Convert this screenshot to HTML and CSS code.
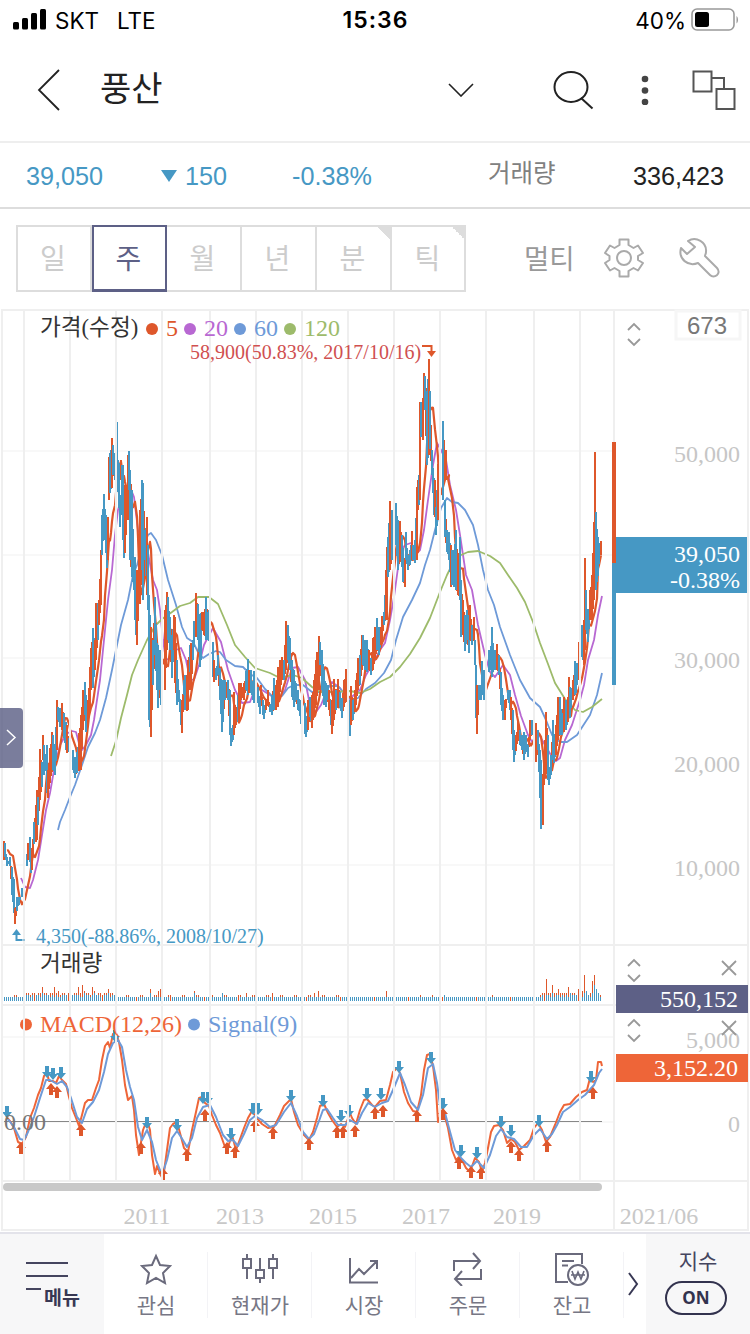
FILE: index.html
```html
<!DOCTYPE html>
<html lang="ko">
<head>
  <meta charset="UTF-8">
  <meta name="viewport" content="width=device-width, initial-scale=1">
  <title>풍산 차트</title>
  <link rel="stylesheet" href="styles.css">
</head>
<body>
  <div class="status-bar">
    <div class="carrier">
      <svg width="34" height="22" viewBox="0 0 34 22"><rect x="0" y="14" width="6" height="7.5" rx="1.5"/><rect x="9" y="10" width="6" height="11.5" rx="1.5"/><rect x="18" y="5" width="6" height="16.5" rx="1.5"/><rect x="27" y="1" width="6" height="20.500" rx="1.5"/></svg>
      <span class="operator">SKT</span><span>LTE</span>
    </div>
    <div class="clock">15:36</div>
    <div class="battery">
      <span>40%</span>
      <svg width="48" height="24" viewBox="0 0 48 24"><rect x="1" y="1" width="42" height="21" rx="5" fill="none" stroke="#999" stroke-width="1.600"/><rect x="4" y="4" width="14" height="15" rx="2.500"/><path d="M45.500 8c2 1.500 2 6 0 7.500z" fill="#999"/></svg>
    </div>
  </div>

  <header class="title-bar">
    <svg class="back" width="24" height="44" viewBox="0 0 24 44"><path d="M22 2L2 22l20 20"/></svg>
    <h1>풍산</h1>
    <svg class="drop" width="26" height="14" viewBox="0 0 26 14"><path d="M1 1l12 12L25 1"/></svg>
    <svg class="search" width="42" height="40" viewBox="0 0 42 40"><ellipse cx="18" cy="17" rx="16.500" ry="15"/><path d="M28 28l11.500 10.500"/></svg>
    <svg class="more" width="8" height="30" viewBox="0 0 8 30"><circle cx="4" cy="4" r="3.300"/><circle cx="4" cy="15.500" r="3.300"/><circle cx="4" cy="27" r="3.300"/></svg>
    <svg class="panes" width="44" height="40" viewBox="0 0 44 40"><path d="M1.500 1.500h18v20h-18zM24.500 19h18v20h-18zM20 8h12v11"/></svg>
  </header>

  <div class="quote">
    <span class="price">39,050</span>
    <span class="diff"><i class="down"></i>150</span>
    <span class="rate">-0.38%</span>
    <span class="vol-label">거래량</span>
    <span class="vol">336,423</span>
  </div>

  <div class="toolbar">
    <div class="tabs">
      <button class="tab">일</button>
      <button class="tab active">주</button>
      <button class="tab">월</button>
      <button class="tab">년</button>
      <button class="tab more-tab">분</button>
      <button class="tab more-tab">틱</button>
    </div>
    <span class="multi">멀티</span>
    <svg class="gear" width="40" height="40" viewBox="0 0 40 40"><path d="M15.500 1.500h9v5.500l5 3 4.500-2.500 5 7.500-5 3v4l5 3-5 7.500-4.500-2.500-5 3v5.500h-9V33l-5-3L6 32.500 1 25l4.500-3v-4L1 15l5-7.500 4.500 2.500 5-3z"/><circle cx="20" cy="20" r="7"/></svg>
    <svg class="wrench" width="42" height="42" viewBox="0 0 42 42"><path d="M10 4C18-1 29 5 28 15c0 2-1 3-1 4l12 12c5 6-3 11-7 7L20 26C10 30 0 22 3 11l6 6 8-7z"/></svg>
  </div>

  <svg class="chart" id="chart" width="750" height="924" viewBox="0 308 750 924">
    <g id="rows"></g>
    <g id="lines"></g>
    <g id="bars" shape-rendering="crispEdges"></g>
    <path class="zero" d="M4 1121.500H602"/>
    <g id="macd"></g>
    <circle cx="26" cy="1024.500" r="6" fill="#ee6538"/>
    <g id="columns" shape-rendering="crispEdges"></g>
    <rect x="3" y="1183" width="599" height="8" rx="4" fill="#c8c8c8"/>

    <g class="legend">
      <text x="40" y="335" class="name">가격(수정)</text>
      <circle cx="152" cy="329" r="6" fill="#de572b"/><text x="166" y="336" fill="#de572b">5</text>
      <circle cx="190" cy="329" r="6" fill="#b868d2"/><text x="204" y="336" fill="#b868d2">20</text>
      <circle cx="240" cy="329" r="6" fill="#6e9ad8"/><text x="254" y="336" fill="#6e9ad8">60</text>
      <circle cx="290" cy="329" r="6" fill="#9dbb6b"/><text x="304" y="336" fill="#9dbb6b">120</text>
      <text x="40" y="971" class="name">거래량</text>
      <text x="40" y="1032" fill="#ee6538">MACD(12,26)</text>
      <circle cx="194" cy="1024.500" r="6" fill="#6e9ad8"/><text x="208" y="1032" fill="#6e9ad8">Signal(9)</text>
      <text x="4" y="1130" class="zero-text">0.00</text>
    </g>
    <text x="190" y="359" class="note high">58,900(50.83%, 2017/10/16)</text>
    <path d="M422 346h9.500v6" fill="none" stroke="#de572b" stroke-width="2"/><path d="M427 351h9l-4.500 6z" fill="#de572b"/>
    <text x="36" y="943" class="note low">4,350(-88.86%, 2008/10/27)</text>
    <path d="M16.500 935v5h9" fill="none" stroke="#4698c4" stroke-width="2" stroke-dasharray="11 1 1"/><path d="M12 935h9l-4.500-6z" fill="#4698c4"/>

    <g class="axis">
      <text x="740" y="462">50,000</text>
      <text x="740" y="668">30,000</text>
      <text x="740" y="772">20,000</text>
      <text x="740" y="876">10,000</text>
      <text x="740" y="1048">5,000</text>
      <text x="740" y="1132">0</text>
    </g>
    <g class="years">
      <text x="147" y="1224">2011</text>
      <text x="240" y="1224">2013</text>
      <text x="333" y="1224">2015</text>
      <text x="426" y="1224">2017</text>
      <text x="517" y="1224">2019</text>
      <text x="659" y="1224">2021/06</text>
    </g>

    <rect x="676" y="311" width="64" height="28" fill="#fff" stroke="#f6f6f6" stroke-width="3"/>
    <text x="707" y="334" class="count">673</text>
    <rect x="612" y="442" width="4" height="121" fill="#de572b"/>
    <rect x="612" y="563" width="4" height="122" fill="#4698c4"/>
    <rect x="616" y="537" width="131" height="56" fill="#4698c4"/>
    <rect x="616" y="985" width="132" height="28" fill="#5d6086"/>
    <rect x="616" y="1054" width="132" height="28" fill="#ee6538"/>
    <g class="badge">
      <text x="740" y="562">39,050</text>
      <text x="740" y="588">-0.38%</text>
      <text x="738" y="1007">550,152</text>
      <text x="738" y="1076">3,152.20</text>
    </g>
    <g class="handles">
      <path d="M628 330l6-6 6 6M628 339l6 6 6-6"/>
      <path d="M628 966l6-6 6 6M628 975l6 6 6-6M722 961l14 14M736 961l-14 14"/>
      <path d="M628 1026l6-6 6 6M628 1035l6 6 6-6M722 1021l14 14M736 1021l-14 14"/>
    </g>
    <path d="M0 708h19a4 4 0 0 1 4 4v52a4 4 0 0 1-4 4H0z" fill="#5d6086" fill-opacity=".82"/>
    <path d="M7 730l8 7.500-8 7.500" fill="none" stroke="#fff" stroke-width="1.500"/>
  </svg>

  <nav class="bottom">
    <div class="menu">
      <svg width="44" height="30" viewBox="0 0 44 30"><path d="M0 2h42M0 15h42M0 28h15"/></svg>
      <span>메뉴</span>
    </div>
    <div class="item">
      <svg width="36" height="34" viewBox="0 0 36 34"><path d="M18 4l4 9 10 1-7 7 2 10-9-5-9 5 2-10-7-7 10-1z"/></svg>
      <span>관심</span>
    </div>
    <div class="item">
      <svg width="36" height="34" viewBox="0 0 36 34"><path d="M5 2v5M5 16v11M1 7h8v9H1zM18 6v12M18 26v5M14 18h8v8h-8zM31 2v5M31 16v11M27 7h8v9h-8z"/></svg>
      <span>현재가</span>
    </div>
    <div class="item">
      <svg width="36" height="34" viewBox="0 0 36 34"><path d="M4 6v24.500h28M5 26l8-9 5 5L31 9M24 9h7v8"/></svg>
      <span>시장</span>
    </div>
    <div class="item">
      <svg width="36" height="34" viewBox="0 0 36 34"><path d="M4 19V9h26M23 1l7 8-7 8M31 17v10H5M12 19l-7 8 7 7"/></svg>
      <span>주문</span>
    </div>
    <div class="item">
      <svg width="36" height="34" viewBox="0 0 36 34"><path d="M14 30H2V2h26v10M8 9h12M8 13.500h6"/><circle cx="24" cy="23" r="10"/><path d="M18 19l3 8 3-7 3 7 3-8M17 23h14" stroke-width="1.600"/></svg>
      <span>잔고</span>
    </div>
    <svg class="next" width="22" height="28" viewBox="0 0 22 28"><path d="M5 3l8 11-8 11"/></svg>
    <div class="index">
      <span>지수</span>
      <b>ON</b>
    </div>
  </nav>
  <script src="chart.js"></script>
</body>
</html>
```

FILE: styles.css
```css
* {
  box-sizing: border-box;
}
body {
  margin: 0;
  width: 750px;
  background: #fff;
  color: #222;
  font-family: "Liberation Sans", "Noto Sans CJK KR", sans-serif;
}
svg {
  display: block;
  flex: none;
}
.status-bar {
  display: grid;
  grid-template-columns: 1fr auto 1fr;
  align-items: center;
  height: 40px;
  padding: 0 12px 0 13px;
  color: #000;
  font-family: Inter, sans-serif;
  font-size: 22.5px;
}
.carrier {
  display: flex;
  align-items: center;
}
.carrier svg {
  margin: -3px 8px 0 0;
}
.operator {
  width: 62px;
}
.clock {
  font-weight: 600;
  font-size: 23px;
  letter-spacing: 1px;
}
.battery {
  display: flex;
  justify-content: flex-end;
  align-items: center;
  gap: 5px;
}
.battery svg {
  margin-right: -1px;
}
.title-bar {
  display: flex;
  align-items: center;
  height: 103px;
  padding: 0 14px 2px 37px;
  border-bottom: 2px solid #eee;
  fill: none;
  stroke: #222;
  stroke-width: 2;
}
.title-bar h1 {
  width: 348px;
  margin: 0 0 2px 39px;
  font-size: 34px;
  font-weight: 400;
  line-height: 50px;
}
.back {
  stroke-width: 1.8;
}
.drop {
  stroke-width: 1.6;
}
.search {
  margin-left: 79px;
}
.more {
  margin-left: 46px;
  fill: #444;
  stroke: none;
}
.panes {
  margin-left: auto;
  stroke: #555;
}
.quote {
  display: grid;
  grid-template-columns: 135px 131px 196px 1fr auto;
  align-items: center;
  height: 66px;
  padding: 2px 26px 0;
  border-bottom: 2px solid #ddd;
  color: #4698c4;
  font-size: 25.2px;
}
.diff {
  display: flex;
  align-items: center;
  gap: 8px;
}
.down {
  border: 8px solid transparent;
  border-top: 12px solid #4698c4;
  border-bottom: 0;
}
.vol-label {
  margin-top: -9px;
  color: #808080;
  font-size: 24.5px;
}
.vol {
  color: #222;
}
.toolbar {
  display: flex;
  align-items: center;
  height: 99px;
  padding: 0 30px 0 16px;
}
.tabs {
  display: flex;
  width: 450px;
  height: 67px;
  border: 2px solid #ddd;
}
.tab {
  width: 75px;
  flex: none;
  margin: 0;
  padding: 0 2px 3px 0;
  border: 0;
  border-right: 2px solid #ddd;
  background: none;
  color: #ccc;
  font: 400 28px "Noto Sans CJK KR", sans-serif;
}
.tab:first-child {
  width: 74px;
}
.tab:last-child {
  width: 73px;
  border-right: 0;
}
.tab.active {
  margin: -2px 0;
  border: 2px solid #5d6086;
  border-bottom-width: 3px;
  color: #5d6086;
}
.more-tab {
  background: linear-gradient(45deg, transparent 50%, #ddd 50%) right top / 13px 13px no-repeat;
}
.multi {
  width: 80px;
  margin: -4px 0 0 58px;
  color: #999;
  font-size: 27.5px;
}
.gear, .wrench {
  margin-top: -2px;
  fill: none;
  stroke: #aaa;
  stroke-width: 2;
  stroke-linejoin: round;
}
.wrench {
  margin-left: auto;
}
.chart text {
  font-family: "Liberation Serif", "Noto Sans CJK KR", serif;
  font-size: 24px;
}
.chart .legend .name {
  fill: #333;
  font-size: 22.6px;
}
.chart .legend .zero-text {
  fill: #777;
}
.chart .note {
  font-size: 20px;
}
.high {
  fill: #d05050;
}
.low {
  fill: #4698c4;
}
.axis text, .badge text {
  text-anchor: end;
  fill: #c6c6c6;
}
.badge text {
  fill: #fff;
}
.years text {
  text-anchor: middle;
  fill: #c8c8c8;
}
.chart .count {
  text-anchor: middle;
  fill: #777;
  font-family: "Liberation Sans", sans-serif;
}
.handles, .zero {
  fill: none;
  stroke: #999;
  stroke-width: 1.8;
}
.zero {
  stroke: #888;
  stroke-width: 1.1;
}
.bottom {
  display: flex;
  height: 102px;
  border-top: 2px solid #e3e3ea;
  fill: none;
  stroke: #6a6a7c;
  stroke-width: 2;
  color: #777785;
  font-size: 21px;
}
.menu {
  width: 104px;
  padding: 27px 0 0 26px;
  background: #f7f7f8;
  stroke: #45455f;
  color: #383854;
}
.menu span {
  display: block;
  margin: -6px 0 0 18px;
  font-size: 19.5px;
  font-weight: 700;
  line-height: 26px;
}
.item {
  display: flex;
  flex-direction: column;
  align-items: center;
  width: 104px;
  padding-top: 18px;
  background: linear-gradient(#f3f3f6, #f3f3f6) right 18px / 1px 66px no-repeat;
}
.item span {
  margin-top: 5px;
  line-height: 30px;
}
.next {
  margin: 36px 0 0 0;
  stroke: #383854;
}
.index {
  display: flex;
  flex-direction: column;
  align-items: center;
  width: 104px;
  padding: 13px 4px 0 0;
  background: #f7f7f8;
  color: #45455f;
}
.index span {
  padding-left: 4px;
  line-height: 30px;
}
.index b {
  width: 62px;
  height: 34px;
  margin-top: 4px;
  border: 2px solid #32324e;
  border-radius: 17px;
  color: #32324e;
  font-family: "Noto Sans", sans-serif;
  font-size: 17px;
  line-height: 30px;
  text-align: center;
}
```

FILE: chart.js
```javascript
const RED = '#de572b';
const BLUE = '#4698c4';

// color, x, top, bottom
const candles = `r3 841 860,b4 843 857,b6 857 866,b9 857 866,b11 867 895,b13 879 913,r14 908 924,b16 897 911,b18 897 905,b21 888 897,
b26 854 866,r27 843 860,b29 837 862,b30 858 873,r31 848 870,b33 822 844,r35 805 842,r36 790 840,b37 797 825,r39 749 800,b41 762 787,
r42 735 760,b43 745 775,b45 755 770,b46 745 793,r47 770 798,r49 748 783,r51 732 772,b52 735 770,b54 745 775,r56 700 750,b57 707 720,
b59 708 727,r61 703 730,b63 713 738,b65 722 750,r66 725 753,b68 738 752,b72 750 770,b74 757 778,b76 752 773,r78 733 771,r80 715 770,
r82 690 730,b84 682 715,b85 695 732,r87 700 718,r89 667 710,r90 648 690,b92 628 688,r94 640 670,r95 603 660,b97 603 640,r98 600 625,
r100 550 605,b101 515 555,b103 494 530,b105 515 553,b106 520 568,r107 517 560,r108 457 500,b109 453 493,r111 438 488,b112 445 475,
b114 453 480,b117 422 492,b119 495 527,r120 460 480,b121 465 515,b122 465 540,b123 540 558,r124 485 553,r126 485 520,r127 455 520,
b128 451 490,b129 470 560,b131 490 577,b133 560 590,b134 557 620,b135 600 635,r136 570 645,r138 565 600,r139 510 604,b141 480 570,
b142 483 600,b144 530 560,r146 517 595,b147 545 610,b148 595 720,r150 627 737,b152 640 685,b154 597 655,b156 643 690,b157 645 708,
b159 650 690,b160 652 705,r164 610 690,r166 592 650,b167 597 640,b169 617 650,b171 635 678,r173 615 650,r174 617 683,b176 660 705,
b178 690 702,b180 700 725,r181 700 733,b183 680 695,b184 675 710,r186 675 711,r187 660 710,b189 645 672,r190 643 690,b192 640 660,
r195 593 637,b197 604 640,b199 615 667,b200 613 660,r201 612 630,r203 612 635,b205 597 640,b207 612 640,b208 610 641,b212 642 677,
r213 660 682,b215 668 680,b217 655 675,b219 668 700,b221 682 732,b222 680 722,b224 680 700,r226 682 698,b227 680 700,b229 690 735,
b230 728 746,b232 725 740,r233 692 735,r235 710 725,b237 695 722,r238 683 722,r240 683 700,r243 683 700,b245 671 690,b247 659 695,
r248 670 693,b250 670 693,b252 683 700,b253 671 703,b257 687 703,b259 697 714,r260 685 700,b262 700 715,b263 705 719,r265 700 710,
r267 690 705,b269 705 712,b271 695 715,b273 678 710,r275 685 710,r277 667 707,r279 660 692,r281 657 680,b283 660 680,r285 621 670,
b287 625 660,b289 638 670,b291 660 697,b293 670 707,b295 683 700,b297 690 710,b299 700 716,b300 705 724,b304 703 734,b305 723 737,
r307 700 730,b309 697 717,r311 695 728,r313 680 715,r315 660 705,r318 636 690,b319 642 665,b321 650 690,b323 670 705,b325 683 707,
b327 685 700,r328 690 710,b330 700 725,r331 700 734,r333 679 720,b335 690 710,r337 679 708,b339 692 708,b341 698 718,r343 680 707,
r345 669 702,b349 700 736,r350 686 725,b352 700 720,r354 690 712,r355 680 705,r357 658 690,b359 655 685,r361 635 670,b362 635 665,
b364 640 670,b366 640 672,r368 650 670,b370 658 675,r372 638 670,r374 627 660,b376 618 650,b378 627 655,r380 627 645,r381 616 640,
b383 612 625,r385 570 620,r386 547 620,b387 537 577,r389 501 570,b391 510 560,b392 520 555,b395 503 545,b397 520 570,r399 521 560,
b401 535 567,b402 548 582,r404 560 587,b405 532 560,b407 555 570,b409 550 565,r411 531 560,b412 545 560,b414 540 563,r416 487 560,
r417 480 510,b418 475 505,r419 402 500,b420 402 437,r422 398 440,r423 373 410,b424 376 410,b426 391 465,r428 359 455,b429 391 449,
b431 450 475,b433 478 515,r434 480 517,b435 507 535,r437 464 520,b442 421 500,r444 450 465,r445 450 480,b444 500 537,b446 530 552,
b448 532 560,r450 545 587,b451 550 585,b453 550 587,b455 530 590,r457 560 595,b459 537 600,b460 580 637,r462 600 635,b464 615 651,
b466 610 640,b468 615 653,r469 605 640,b471 625 645,r473 617 640,b474 640 665,b475 665 718,r476 685 734,b478 685 700,b480 685 700,
b481 661 693,b483 670 700,b488 650 672,b490 646 670,b491 627 677,b493 650 670,b495 650 670,r496 644 670,b498 655 675,b500 672 705,
b502 695 720,r504 700 720,b507 690 700,b509 690 710,r510 697 720,b512 710 750,b513 730 762,r515 735 751,r517 720 740,b519 730 745,
b521 735 750,b523 732 760,b525 735 750,b527 745 757,r529 720 740,b531 720 735,r535 723 762,b537 730 750,b539 750 798,b540 760 829,
r542 780 825,r543 760 785,r545 712 770,b547 735 780,b548 770 785,b550 755 775,b552 720 760,b553 735 763,r555 725 755,r557 697 740,
b559 697 735,b561 713 735,r563 697 732,b565 700 730,r567 697 722,r568 677 710,b569 687 718,r572 680 700,b574 661 695,b575 675 693,
r578 642 680,b581 625 657,r583 620 665,r584 558 650,b585 590 630,b587 620 642,r589 590 620,r591 575 620,r593 522 600,r594 452 570,
b595 512 590,b597 537 576,r600 541 555`.split(',').map(s => {
  const [x, top, bottom] = s.trim().slice(1).split(' ').map(Number);
  return { color: s.trim()[0] === 'r' ? RED : BLUE, x, top, bottom };
});

const ma20 = '21,878 25,887 30,888 33,880 38,860 42,835 46,810 50,793 54,770 60,745 64,738 68,733 72,731 76,732 80,747 82,750 86,745 91,735 94,720 97,700 100,680 104,640 108,600 112,570 115,535 118,510 124,490 130,487 134,497 138,530 143,540 148,553 153,580 157,590 160,610 163,640 166,660 170,658 176,650 181,648 186,660 190,679 194,680 199,665 204,645 208,637 213,628 221,642 228,670 235,690 242,703 250,702 256,686 262,690 270,695 278,700 285,690 292,668 298,667 305,680 310,705 316,712 321,705 327,690 332,682 340,688 348,700 360,690 366,675 375,660 380,650 385,643 390,620 394,597 400,553 405,545 411,543 417,553 420,550 424,530 428,500 433,465 437,443 441,450 446,460 450,485 456,510 460,535 466,575 472,590 478,625 485,655 490,672 495,677 503,665 510,675 515,695 521,716 528,735 532,742 538,733 545,745 552,757 556,761 560,758 565,740 572,725 580,700 584,685 588,660 594,640 598,615 602,596';
const ma60 = '58,830 60,822 65,810 70,797 75,785 82,765 88,747 95,733 100,720 106,698 112,670 116,650 121,625 128,600 133,575 137,565 142,548 148,535 151,533 156,540 162,555 168,580 176,605 182,627 187,638 193,642 198,652 203,658 209,654 216,651 220,652 226,660 235,666 243,667 250,674 257,678 265,689 272,696 282,696 288,688 294,685 303,685 312,692 320,692 330,686 338,686 345,694 352,700 358,698 366,689 375,683 384,673 391,660 396,640 403,617 412,600 420,583 425,565 430,550 435,530 441,508 447,498 452,502 458,503 465,510 473,525 478,545 483,570 488,590 494,605 500,627 510,655 520,680 530,698 540,707 546,720 552,735 560,742 567,742 577,735 590,715 597,695 602,673';
const ma120 = '111,756 116,741 121,718 127,695 132,675 138,660 147,640 155,626 162,619 172,612 180,606 190,603 198,597 209,597 218,604 227,625 235,645 245,657 255,668 270,673 280,678 293,675 302,678 312,687 320,692 335,692 350,691 360,693 370,689 380,682 390,677 400,667 410,654 420,638 430,618 440,592 447,575 454,561 461,555 468,552 478,551 490,556 500,563 508,575 517,588 525,602 533,622 540,643 548,664 555,683 565,699 575,710 583,712 592,707 602,699';

const macd = '6,1116 10,1121 14,1128 18,1142 22,1144 26,1137 30,1118 34,1108 38,1095 41,1088 44,1076 47,1073 49,1081 53,1081 56,1083 59,1076 62,1080 66,1084 69,1097 72,1108 76,1118 79,1126 82,1115 85,1103 88,1100 92,1100 96,1088 99,1080 102,1060 105,1046 108,1042 110,1048 113,1034 116,1033 119,1042 122,1060 125,1085 128,1100 132,1096 134,1110 136,1135 139,1155 143,1130 147,1120 150,1130 152,1155 155,1174 157,1166 160,1174 163,1179 167,1150 170,1128 173,1124 177,1122 180,1133 184,1148 188,1152 192,1130 196,1112 199,1098 202,1097 205,1103 209,1106 212,1115 216,1125 220,1133 225,1147 228,1147 232,1135 236,1150 240,1139 244,1128 248,1118 252,1111 256,1117 262,1124 268,1128 274,1127 280,1115 284,1106 288,1102 291,1099 294,1112 298,1125 304,1135 309,1140 313,1132 317,1118 320,1106 324,1104 328,1113 332,1120 337,1127 341,1124 345,1127 350,1113 352,1118 356,1124 360,1110 364,1100 367,1099 372,1105 375,1107 380,1101 386,1100 390,1085 393,1072 397,1068 400,1073 404,1092 408,1103 413,1111 417,1112 421,1095 424,1070 427,1055 430,1054 433,1066 436,1090 438,1122 443,1110 448,1128 452,1150 456,1160 459,1157 462,1160 466,1168 470,1172 475,1158 479,1162 482,1172 485,1163 488,1148 491,1132 494,1126 499,1125 503,1130 507,1143 511,1139 515,1142 519,1150 524,1146 530,1140 534,1128 538,1123 542,1130 546,1142 550,1137 555,1125 560,1112 564,1105 570,1104 576,1097 582,1092 587,1090 590,1078 593,1082 596,1080 598,1062 601,1062 602,1066';
const signal = '8,1119 14,1127 20,1139 24,1140 28,1132 34,1117 40,1098 46,1080 50,1080 57,1084 62,1081 67,1087 71,1098 77,1117 82,1123 87,1109 93,1102 99,1090 104,1072 108,1054 113,1043 118,1040 122,1047 126,1070 130,1087 134,1100 138,1127 142,1140 147,1130 152,1142 156,1160 162,1175 167,1160 172,1138 177,1131 181,1137 187,1147 192,1138 197,1118 203,1107 210,1105 216,1117 223,1135 228,1141 233,1140 238,1146 244,1134 250,1120 255,1116 262,1120 270,1127 276,1125 284,1112 291,1103 297,1116 303,1132 309,1139 314,1134 319,1121 323,1110 327,1109 333,1118 338,1125 345,1125 350,1120 357,1124 362,1113 368,1103 375,1107 382,1103 388,1101 393,1090 400,1073 405,1085 411,1102 418,1110 423,1095 428,1068 433,1064 437,1083 440,1105 445,1113 449,1128 455,1150 461,1158 466,1163 471,1167 477,1161 484,1168 490,1155 496,1136 501,1129 507,1137 514,1139 521,1147 527,1147 534,1135 540,1129 547,1139 552,1134 557,1125 563,1112 570,1107 578,1100 585,1095 594,1085 599,1073 602,1069';

const sells = '7,1106 47,1066 53,1068 61,1067 115,1030 147,1117 177,1119 203,1092 208,1092 231,1128 253,1103 258,1103 291,1090 323,1095 341,1110 349,1105 367,1088 381,1088 399,1061 431,1052 443,1098 461,1145 477,1147 501,1116 511,1125 539,1115 591,1071';
const buys = '21,1142 51,1083 57,1086 81,1124 141,1142 163,1168 187,1149 205,1109 227,1142 235,1146 255,1120 273,1127 309,1138 337,1126 343,1126 355,1125 375,1107 383,1105 417,1110 443,1108 459,1157 471,1166 481,1167 511,1141 519,1149 547,1140 593,1087';

// volume bars that rise over the floor: x: [height, blue part]
const volumes = { 42: [14, 8], 54: [14, 4], 58: [10, 4], 78: [14, 6], 82: [16, 4], 84: [10, 8], 92: [14, 6], 94: [10, 8],
  108: [12, 8], 150: [12, 8], 158: [10, 4], 160: [12, 4], 194: [10, 8], 222: [8, 8], 246: [8, 4], 272: [8, 4], 314: [8, 4],
  318: [10, 4], 386: [10, 4], 420: [6, 4], 432: [6, 4], 444: [6, 6], 492: [6, 4], 546: [22, 6], 552: [16, 8], 554: [8, 4],
  558: [12, 6], 564: [8, 4], 568: [14, 4], 570: [8, 8], 578: [12, 6], 582: [10, 4], 584: [26, 8], 586: [10, 10],
  592: [20, 8], 594: [26, 16], 596: [12, 12], 598: [8, 8] };

const get = id => document.getElementById(id);
const rect = (x, y, w, h, fill) => `<rect x="${x}" y="${y}" width="${w}" height="${h}" fill="${fill}"/>`;
const line = (points, color, width = 1.8) =>
  `<polyline points="${points}" fill="none" stroke="${color}" stroke-width="${width}" stroke-linejoin="round"/>`;

function drawGrid() {
  let rows = '';
  [450, 554, 657, 760, 864, 1036, 1121].forEach(y => rows += rect(2, y, 611, 2, '#f8f8f8'));
  [309, 944, 1004, 1180, 1229].forEach(y => rows += rect(2, y, 746, 2, '#efefef'));
  get('rows').innerHTML = rows;

  let columns = '';
  [23, 69, 115, 161, 209, 255, 301, 347, 393, 439, 485, 533, 579].forEach(x => columns += rect(x, 311, 2, 869, '#efefef'));
  [1, 613, 747].forEach(x => columns += rect(x, 309, 2, 922, '#efefef'));
  get('columns').innerHTML = columns;
}

function drawPrices() {
  let bars = '';
  candles.forEach((c, i) => {
    const next = candles[i + 1];
    // close the hairline between neighbours with a shorter bar of the other color
    if (next && next.x - c.x > 1 && next.x - c.x < 4) {
      const top = (c.top + next.top) / 2 + 4;
      const bottom = (c.bottom + next.bottom) / 2 - 2;
      if (bottom > top) {
        bars += rect(c.x + 1, Math.round(top), 2, Math.round(bottom - top), i % 3 ? c.color : RED);
      }
    }
    bars += rect(c.x, c.top, c.x === 117 ? 1 : 2, c.bottom - c.top, c.color);
  });
  // tall wick of the 2010 high stands right of the year line
  bars += rect(117, 460, 2, 32, BLUE);

  for (let x = 4; x < 602; x += 2) {
    let [height, blue] = volumes[x] || [4, 4];
    if (!volumes[x]) {
      if ((x > 25 && x < 115) || (x > 538 && x < 602)) {
        height = x % 6 ? 8 : 6;
        blue = x % 10 ? 6 : 4;
      } else if (x < 350 && x % 14 < 4) {
        height = 6;
      }
    }
    bars += rect(x, 1001 - height, 1, height - blue, RED);
    bars += rect(x, 1001 - blue, 1, blue, x % 34 ? BLUE : RED);
  }
  get('bars').innerHTML = bars;

  // short average follows the last few bars
  const ma5 = candles.map(c => {
    const last = candles.filter(o => o.x <= c.x && o.x > c.x - 7);
    const sum = last.reduce((total, o) => total + (o.top + o.bottom) / 2, 0);
    return [c.x + 4, (sum / last.length).toFixed(1)];
  }).filter(p => p[0] <= 602).map(p => p.join()).join(' ');
  get('lines').innerHTML = line(ma20, '#b868d2') + line(ma60, '#6e9ad8') + line(ma120, '#9dbb6b') + line(ma5, RED, 2.2);
}

function drawMacd() {
  let html = line(macd, '#ee6538', 2) + line(signal, '#6e9ad8', 2);
  sells.split(' ').forEach(p => {
    html += `<path transform="translate(${p})" fill="${BLUE}" d="M-2 0h4v6h3l-5 6-5-6h3z"/>`;
  });
  buys.split(' ').forEach(p => {
    html += `<path transform="translate(${p})" fill="${RED}" d="M-2 12h4V6h3L0 0l-5 6h3z"/>`;
  });
  get('macd').innerHTML = html;
}

drawGrid();
drawPrices();
drawMacd();
```
